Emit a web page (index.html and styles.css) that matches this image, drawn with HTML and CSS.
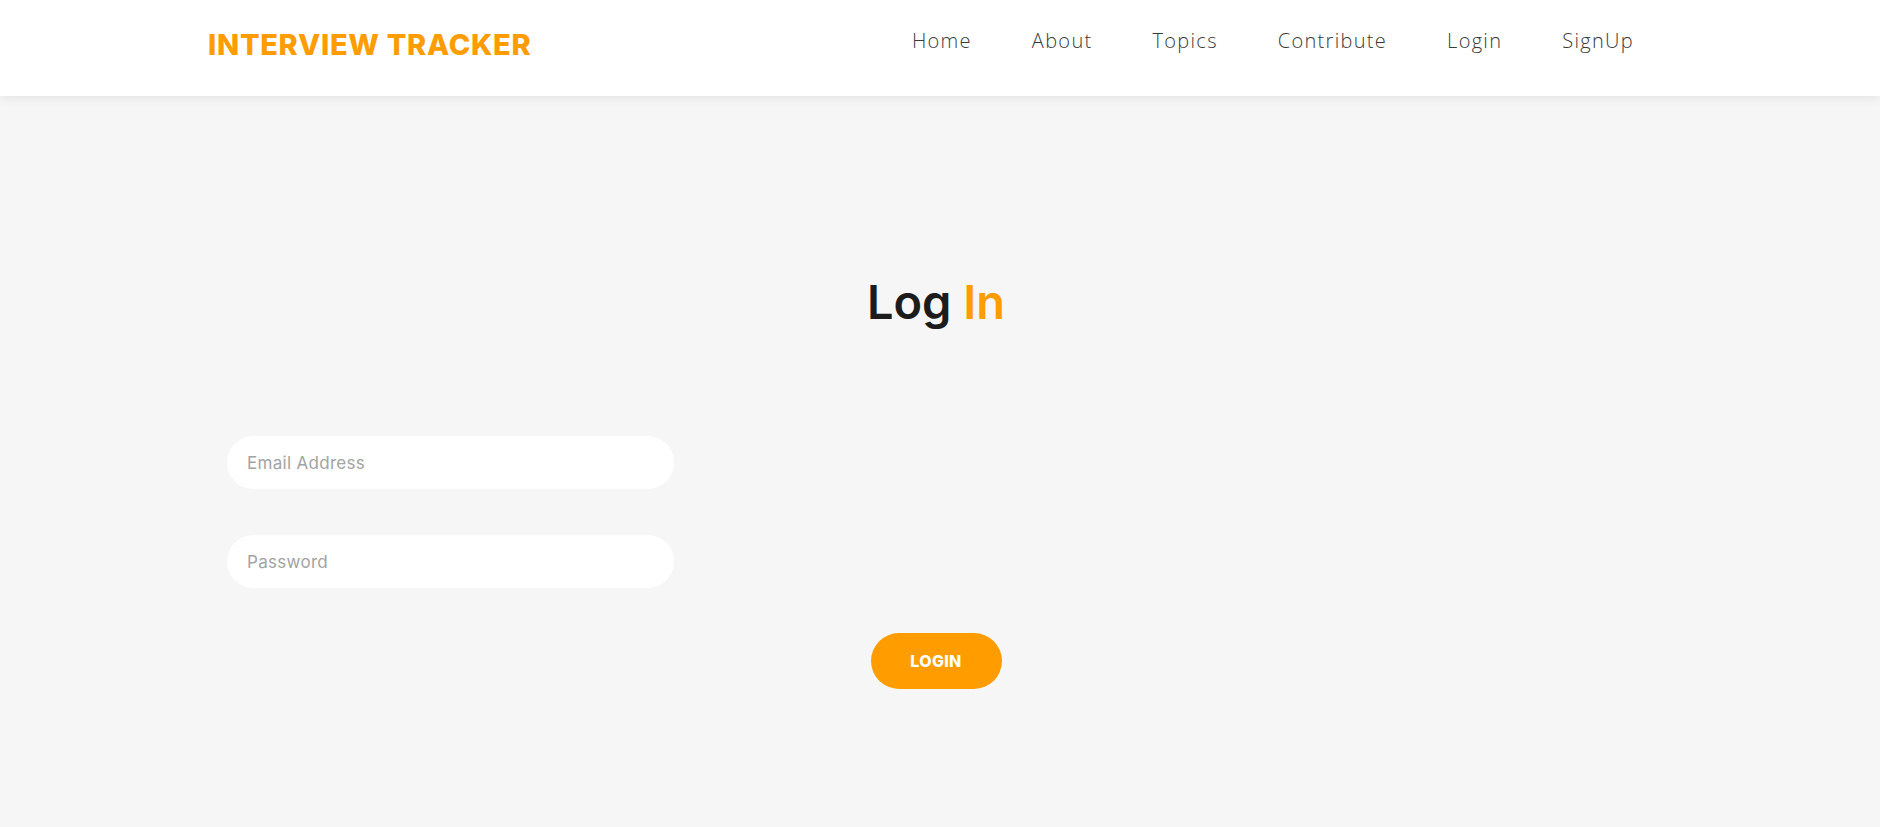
FILE: index.html
```html
<!DOCTYPE html>
<html lang="en">
<head>
<meta charset="utf-8">
<title>Interview Tracker - Log In</title>
<link rel="stylesheet" href="styles.css">
</head>
<body>
<header class="site-header">
  <div class="container header-inner">
    <a class="logo" href="#">INTERVIEW TRACKER</a>
    <nav class="nav">
      <a href="#">Home</a>
      <a href="#">About</a>
      <a href="#">Topics</a>
      <a href="#">Contribute</a>
      <a href="#">Login</a>
      <a href="#">SignUp</a>
    </nav>
  </div>
</header>
<main class="main">
  <div class="container">
    <h1 class="title">Log <span class="accent">In</span></h1>
    <form class="login-form">
      <div class="fields">
        <input class="field" type="email" placeholder="Email Address">
        <input class="field" type="password" placeholder="Password">
      </div>
      <button class="btn" type="button">LOGIN</button>
    </form>
  </div>
</main>
</body>
</html>
```

FILE: styles.css
```css
* { box-sizing: border-box; }
html, body { margin: 0; padding: 0; }
body {
  font-family: "Inter", "Open Sans", "Liberation Sans", sans-serif;
  background: #f6f6f6;
  color: #1c1c1c;
  height: 827px;
  overflow: hidden;
}
.container {
  padding: 0 216px 0 208px;
}
.site-header {
  background: #ffffff;
  height: 96px;
  box-shadow: 0 2px 10px rgba(0, 0, 0, 0.08);
  position: relative;
  z-index: 1;
}
.header-inner {
  height: 96px;
  display: flex;
  align-items: center;
  justify-content: space-between;
}
.logo {
  color: #fe9c00;
  font-weight: 800;
  font-size: 29px;
  letter-spacing: 0.7px;
  text-decoration: none;
  margin-top: -8px;
}
.nav {
  display: flex;
  align-items: center;
  margin-top: -16px;
}
.nav a {
  font-family: "Open Sans", "Inter", sans-serif;
  color: #3a3a3a;
  font-weight: 300;
  font-size: 20px;
  letter-spacing: 1.3px;
  text-decoration: none;
  padding: 0 30px;
}
.main {
  padding-top: 177px;
}
.title {
  margin: 0;
  text-align: center;
  font-size: 47px;
  font-weight: 600;
  line-height: 58px;
  color: #1c1c1c;
}
.accent { color: #fe9c00; }
.login-form {
  margin-top: 105px;
  display: flex;
  flex-direction: column;
}
.fields {
  display: flex;
  flex-direction: column;
  gap: 46px;
  padding-left: 19px;
}
.field {
  width: 447px;
  height: 53px;
  border: none;
  outline: none;
  border-radius: 27px;
  background: #ffffff;
  padding: 0 20px;
  font-family: inherit;
  font-size: 17px;
  letter-spacing: 0.3px;
  color: #333;
}
.field::placeholder { color: #a3a3a3; }
.btn {
  align-self: center;
  margin-top: 45px;
  width: 131px;
  height: 56px;
  border: none;
  border-radius: 28px;
  background: #fe9c00;
  color: #ffffff;
  font-family: inherit;
  font-weight: 800;
  font-size: 16px;
  letter-spacing: 0.3px;
  cursor: pointer;
}
```
